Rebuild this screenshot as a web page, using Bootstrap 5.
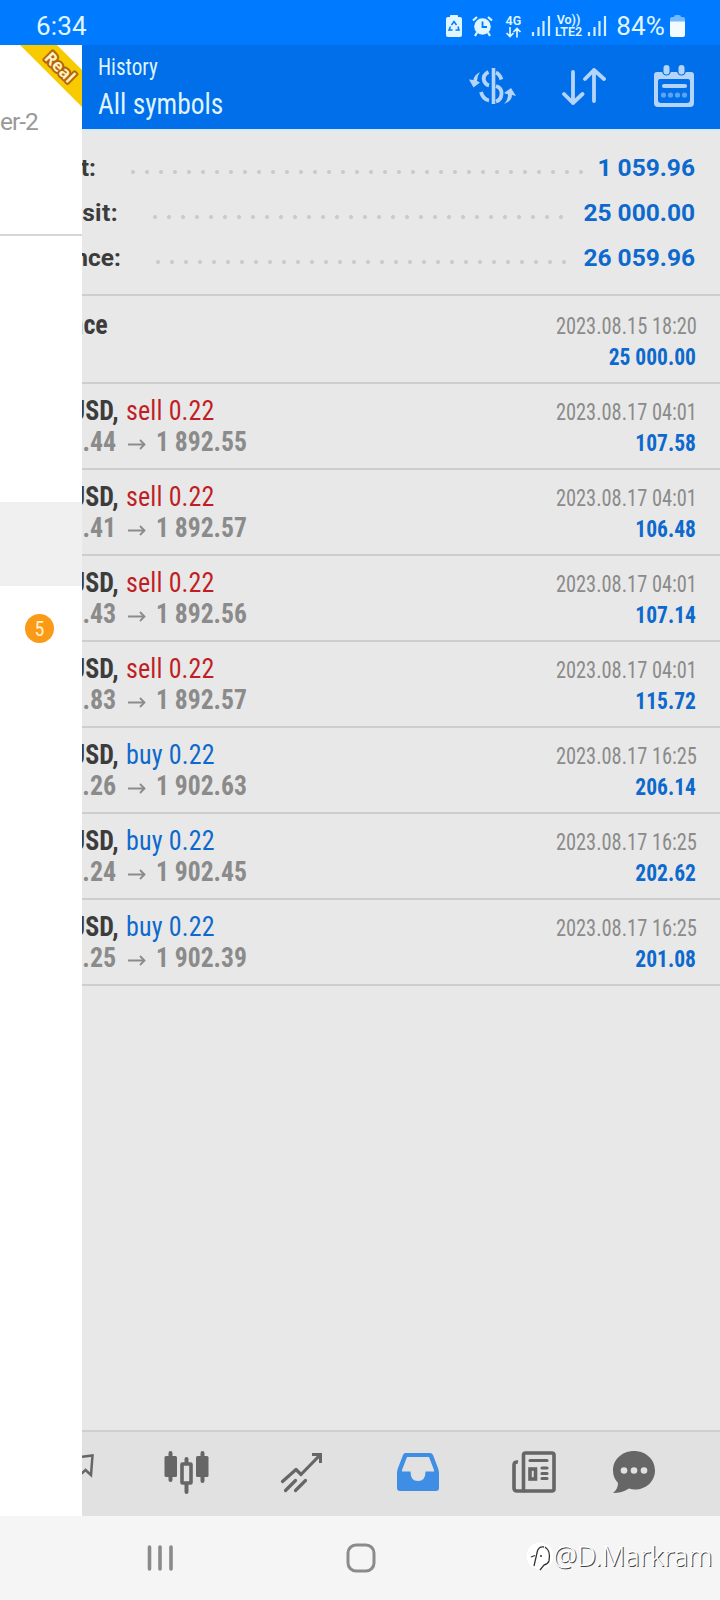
<!DOCTYPE html>
<html lang="en">
<head>
<meta charset="utf-8">
<meta name="viewport" content="width=device-width, initial-scale=1">
<title>History</title>
<link href="https://cdn.jsdelivr.net/npm/bootstrap@5.3.0/dist/css/bootstrap.min.css" rel="stylesheet">
<style>
body{font-family:Roboto,"Liberation Sans",sans-serif;width:720px;height:1600px;overflow:hidden;background:#e8e8e8;color:#3c3c3c;line-height:1}
svg{display:block;flex:none}
.cond{font-family:"Roboto Condensed",Roboto,sans-serif;font-stretch:75%}
.status{height:45px;background:#007bff;color:#e0f6ff;padding:7px 35px 0 36px}
.clock{font-size:26px;letter-spacing:.2px}
.tiny{font-size:12.5px;font-weight:600;line-height:12px}
.appbar{height:86px;background:#006fe9;border-bottom:2px solid #d3eaff;color:#dff4ff;padding:0 25px 0 16px}
.appbar .t1{font-size:23.5px;line-height:26px;transform:scaleX(.9);transform-origin:left}
.appbar .t2{font-size:29px;line-height:34px;margin-top:7px;transform:scaleX(.945);transform-origin:left}
.drawer{width:82px;background:#fff;flex:none}
.server{height:191px;border-bottom:2px solid #d6d6d6;padding-top:63px;font-size:24.5px;line-height:28px;color:#999;letter-spacing:-1px}
.ribbon{top:0;right:0}
.active-item{height:84px;background:#f0f0f0;margin-top:266px}
.count{width:29px;height:29px;background:#fb9a17;color:#fff3c8;font-size:20px;margin:28px 0 0 25px}
.summary{height:165px;padding:15px 25px 0 0;border-bottom:2px solid #cdcdcd;font-size:24.5px;font-weight:700}
.summary .line{height:45px}
.leader{height:4px;margin:7px 13px 0 0;background:radial-gradient(circle at 7px 2px,#cbcbcb 1.7px,transparent 2.3px) repeat-x;background-size:14px 4px}
.clip-end{overflow:hidden;justify-content:flex-end}
.blue{color:#0d69cd}
.red{color:#bf1f24}
.squeeze{transform:scaleX(.935);transform-origin:right;white-space:nowrap}
.from-left{transform-origin:left}
.price{transform:scaleX(.92);transform-origin:left;white-space:nowrap}
.deal{height:86px;border-bottom:2px solid #cdcdcd;padding:11px 24px 0 0;font-size:27.8px;line-height:31px}
.deal.first{height:88px;padding-top:13px}
.deal .muted{color:#8b8b8b;font-weight:700}
.stamp{font-size:24px;color:#8b8b8b;line-height:31px;margin:2px -1px 0 0;transform:scaleX(.85);transform-origin:right}
.profit{font-size:23px;font-weight:700}
.tabs{height:86px;background:#e1e1e1;border-top:2px solid #cfcfcf;padding-top:18px}
.sysbar{height:84px;background:#f5f5f5}
.wm{font-family:"Noto Sans",sans-serif;font-weight:300;font-size:27px;color:#fff;text-shadow:1px 1px 0 #444;margin-bottom:6px}
</style>
</head>
<body class="d-flex flex-column">
<header class="status d-flex align-items-center flex-shrink-0">
  <span class="clock me-auto">6:34</span>
  <svg width="16" height="24" viewBox="0 0 16 24" style="margin-right:10px"><path fill="#e0f6ff" d="M4 3V1.500Q4 1 5 1H11Q12 1 12 1.500V3H14Q16 3 16 5V21Q16 23 14 23H2Q0 23 0 21V5Q0 3 2 3Z"/><path d="M5.500 11 8 7.500 10.500 11M12 12.500 13 16H9.500M6.500 16H3L4.500 12.500" fill="none" stroke="#007bff" stroke-width="1.500"/></svg>
  <svg width="21" height="22" viewBox="0 0 21 22" style="margin-right:12px"><circle cx="10.500" cy="11.500" r="8.300" fill="#e0f6ff"/><path d="M1 5.500 5 2M20 5.500 16 2M5 17.500 3 21M16 17.500 18 21" stroke="#e0f6ff" stroke-width="2.200"/><path d="M10.500 6.500V12H15" fill="none" stroke="#007bff" stroke-width="1.800"/></svg>
  <span class="tiny text-center" style="margin-right:9px">4G<svg width="17" height="11" viewBox="0 0 17 11"><path d="M5 0V9M1.500 6 5 9.500 8.500 6M12 10.500V1.500M8.500 5 12 1.500 15.500 5" fill="none" stroke="#e0f6ff" stroke-width="1.700"/></svg></span>
  <svg width="20" height="22" viewBox="0 0 20 22" style="margin-right:4px"><path d="M2 17V21M7.500 12V21M12.500 6V21M18 1V21" stroke="#d3efff" stroke-width="2.200"/></svg>
  <span class="tiny text-center" style="margin-right:5px">Vo))<br>LTE2</span>
  <svg width="20" height="22" viewBox="0 0 20 22" style="margin-right:9px"><path d="M2 17V21M7.500 12V21M12.500 6V21M18 1V21" stroke="#d3efff" stroke-width="2.200"/></svg>
  <span class="clock" style="margin-right:5px">84%</span>
  <svg width="15" height="22" viewBox="0 0 15 22"><path fill="#72b9ff" d="M4 2Q4 0 6 0H9Q11 0 11 2H13Q15 2 15 4V8H0V4Q0 2 2 2Z"/><path fill="#f2fcff" d="M0 6.500H15V20Q15 22 13 22H2Q0 22 0 20Z"/></svg>
</header>

<div class="d-flex flex-grow-1">
  <aside class="drawer position-relative">
    <div class="server">er-2</div>
    <svg class="ribbon position-absolute" width="82" height="64" viewBox="0 0 82 64"><path fill="#f7cb00" d="M20 0H57L82 25V62Z"/><text x="60" y="28" transform="rotate(45 60 22)" text-anchor="middle" font-family="Open Sans" font-weight="700" font-size="16.500" letter-spacing="0" fill="#fff2c4" stroke="#b5640b" stroke-width="4" stroke-linejoin="round" paint-order="stroke">Real</text></svg>
    <div class="active-item"></div>
    <div class="count rounded-circle d-flex align-items-center justify-content-center cond">5</div>
  </aside>

  <main class="flex-grow-1 d-flex flex-column">
    <div class="appbar d-flex align-items-center">
      <div class="cond me-auto"><div class="t1">History</div><div class="t2">All symbols</div></div>
      <svg width="48" height="40" viewBox="0 0 48 40" style="margin:0 44px 2px 0"><g fill="none" stroke="#b5d4fa"><path stroke-width="3.600" d="M25.500 2V38"/><path stroke-width="3.800" d="M20.500 6Q14.500 9 16 14.500 17 18.500 21 19.500M13 26Q15 33.500 21 34.500M28 6.500Q31.500 8 33.500 13.500M28 20Q34 22 33.500 28 33 34 28 35.500"/></g><path fill="#b5d4fa" d="M12 6Q6 9 5.500 14L1 13.500 5.500 21.500 12 16.500 9 15Q9 10 12 6ZM36 38Q44 35 44 29L48 30 43 22 36 27 40 28.500Q40 34 36 38Z"/></svg>
      <svg width="46" height="40" viewBox="0 0 46 40" style="margin:0 47px 2px 0"><path fill="none" stroke="#b5d4fa" stroke-width="3.800" stroke-linecap="round" stroke-linejoin="round" d="M13 6V37M4 28 13 37 22.500 28M34 35V4M25 13 34 4 44 13"/></svg>
      <svg width="42" height="44" viewBox="0 -1 42 44" style="margin-bottom:2px"><path fill="#b5d4fa" fill-rule="evenodd" d="M4 7H38Q41 7 41 10V38Q41 42 37 42H5Q1 42 1 38V10Q1 7 4 7ZM7 14Q5 14 5 16V35Q5 38 8 38H34Q37 38 37 35V16Q37 14 35 14Z"/><path stroke="#006fe9" stroke-width="9" stroke-linecap="round" d="M13.500 4V6M28.500 4V6"/><path stroke="#b5d4fa" stroke-width="6" stroke-linecap="round" d="M13.500 3V6.500M28.500 3V6.500"/><path stroke="#b5d4fa" stroke-width="4.200" stroke-linecap="round" d="M11 21H32"/><g fill="#5fa4f4"><circle cx="10.500" cy="30" r="2.600"/><circle cx="17.500" cy="30" r="2.600"/><circle cx="24.500" cy="30" r="2.600"/><circle cx="31.500" cy="30" r="2.600"/></g></svg>
    </div>

    <section class="summary">
      <div class="line d-flex align-items-center"><span class="d-flex clip-end" style="width:14px">t:</span><span class="leader flex-grow-1" style="margin-left:30px"></span><span class="blue">1 059.96</span></div>
      <div class="line d-flex align-items-center"><span class="d-flex clip-end" style="width:36px;letter-spacing:.4px">sit:</span><span class="leader flex-grow-1" style="margin:7px 18px 0 30px"></span><span class="blue">25 000.00</span></div>
      <div class="line d-flex align-items-center"><span class="d-flex clip-end" style="width:39px">nce:</span><span class="leader flex-grow-1" style="margin-left:30px"></span><span class="blue">26 059.96</span></div>
    </section>

    <section class="cond" id="deals">
      <div class="deal first d-flex justify-content-between"><b class="d-flex clip-end" style="width:26px"><span class="squeeze">nce</span></b><div class="text-end"><div class="stamp">2023.08.15 18:20</div><div class="profit blue squeeze">25 000.00</div></div></div>
    </section>

    <nav class="tabs d-flex mt-auto">
      <svg width="12" height="44" viewBox="0 0 12 44"><path d="M-2 7 10.500 5.500 9 25 3.500 20-2 25" fill="none" stroke="#666" stroke-width="2.500"/></svg>
      <svg width="46" height="44" viewBox="0 0 46 44" style="margin-left:70px"><path fill="none" stroke="#666" stroke-width="4" stroke-linecap="round" d="M6.500 3V30M38.500 3V31M22.500 9V15M22.500 34V42"/><rect x="0.500" y="6" width="12.500" height="21" rx="1.500" fill="#666"/><rect x="32" y="6" width="12.500" height="21" rx="1.500" fill="#666"/><rect x="18" y="14" width="9" height="19" rx=".5" fill="#e1e1e1" stroke="#666" stroke-width="3.600"/></svg>
      <svg width="44" height="44" viewBox="0 0 44 44" style="margin-left:70px"><path fill="none" stroke="#666" stroke-width="3.200" stroke-linecap="round" stroke-linejoin="round" d="M2.500 31.500 16 19.500 21 24.500 40 5M5.500 40.500 15.500 30.500M15.500 40.500 25.500 30.500"/><path fill="#666" d="M32 3H42V13H39V6H32Z"/></svg>
      <svg width="44" height="44" viewBox="0 0 44 44" style="margin-left:72px"><path fill="#3f8ee6" fill-rule="evenodd" d="M9 3H34Q36 3 37 5L42 18Q43 21 43 23V38Q43 41 40 41H4Q1 41 1 38V23Q1 21 2 18L7 5Q8 3 9 3ZM11 7 6 20V21.500H14.500Q14.500 31 22 31T29.500 21.500H38V20L33 7Z"/></svg>
      <svg width="44" height="44" viewBox="0 0 44 44" style="margin-left:72px"><g fill="none" stroke="#666" stroke-width="3.600"><rect x="11.500" y="3" width="30.500" height="38" rx="2"/><path d="M6 12Q2 11.500 2 15V38Q2 41 5 41H13"/><rect x="18" y="19" width="5.500" height="10"/></g><path stroke="#666" stroke-width="3.200" stroke-linecap="round" d="M18 10.500H35M30 18H35M30 23.500H35M30 28.500H35"/></svg>
      <svg width="44" height="44" viewBox="0 0 44 44" style="margin-left:56px"><path fill="#666" d="M22 1C34 1 43 9.500 43 20.500S34 39.500 23 39.500Q20 39.500 17 38.500 10 43 1 43 6 39 6 33 1 28 1 20.500C1 9.500 10 1 22 1Z"/><g fill="#e1e1e1"><circle cx="12" cy="20.500" r="3.300"/><circle cx="22" cy="20.500" r="3.300"/><circle cx="32" cy="20.500" r="3.300"/></g></svg>
    </nav>
  </main>
</div>

<footer class="sysbar d-flex align-items-center flex-shrink-0">
  <svg width="26" height="28" viewBox="0 0 26 28" style="margin-left:147px"><path stroke="#8b8b8b" stroke-width="3.600" stroke-linecap="round" d="M2.500 3V25M13 3V25M24 3V25"/></svg>
  <svg width="30" height="30" viewBox="0 0 30 30" style="margin-left:173px"><rect x="2" y="2" width="26" height="26" rx="8" fill="none" stroke="#8b8b8b" stroke-width="3"/></svg>
  <svg width="28" height="34" viewBox="0 0 28 34" style="margin:0 0 5px 149px"><circle cx="15" cy="17" r="13.500" fill="#fff"/><path d="M19 8Q13 7 12 14L9 27M6 18 10 16.500M15 17H17M20 8Q26 12 24 22 23 25 19 26L15 31" fill="none" stroke="#333" stroke-width="1.300"/></svg>
  <span class="wm">@D.Markram</span>
</footer>

<script src="https://cdn.jsdelivr.net/npm/bootstrap@5.3.0/dist/js/bootstrap.bundle.min.js"></script>
<script>
const deals = [
  ['sell','7.44','1 892.55','2023.08.17 04:01','107.58'],
  ['sell','7.41','1 892.57','2023.08.17 04:01','106.48'],
  ['sell','7.43','1 892.56','2023.08.17 04:01','107.14'],
  ['sell','7.83','1 892.57','2023.08.17 04:01','115.72'],
  ['buy','.26','1 902.63','2023.08.17 16:25','206.14'],
  ['buy','.24','1 902.45','2023.08.17 16:25','202.62'],
  ['buy','.25','1 902.39','2023.08.17 16:25','201.08']
];
document.getElementById('deals').insertAdjacentHTML('beforeend', deals.map(([side,open,close,time,profit]) => `
  <div class="deal d-flex justify-content-between">
    <div>
      <div class="d-flex"><b class="d-flex clip-end" style="width:37px"><span class="squeeze">USD,</span></b><span class="squeeze from-left ${side==='sell'?'red':'blue'}" style="margin-left:7px;letter-spacing:.15px">${side} 0.22</span></div>
      <div class="d-flex muted"><span class="d-flex clip-end" style="width:34px"><span class="squeeze">${open}</span></span>
        <svg width="18" height="31" viewBox="0 0 18 31" style="margin:0 10px 0 12px"><path d="M0 18.500H16M12 14 16.500 18.500 12 23" fill="none" stroke="#8b8b8b" stroke-width="1.800"/></svg><span class="price">${close}</span></div>
    </div>
    <div class="text-end"><div class="stamp">${time}</div><div class="profit blue squeeze">${profit}</div></div>
  </div>`).join(''));
</script>
</body>
</html>
